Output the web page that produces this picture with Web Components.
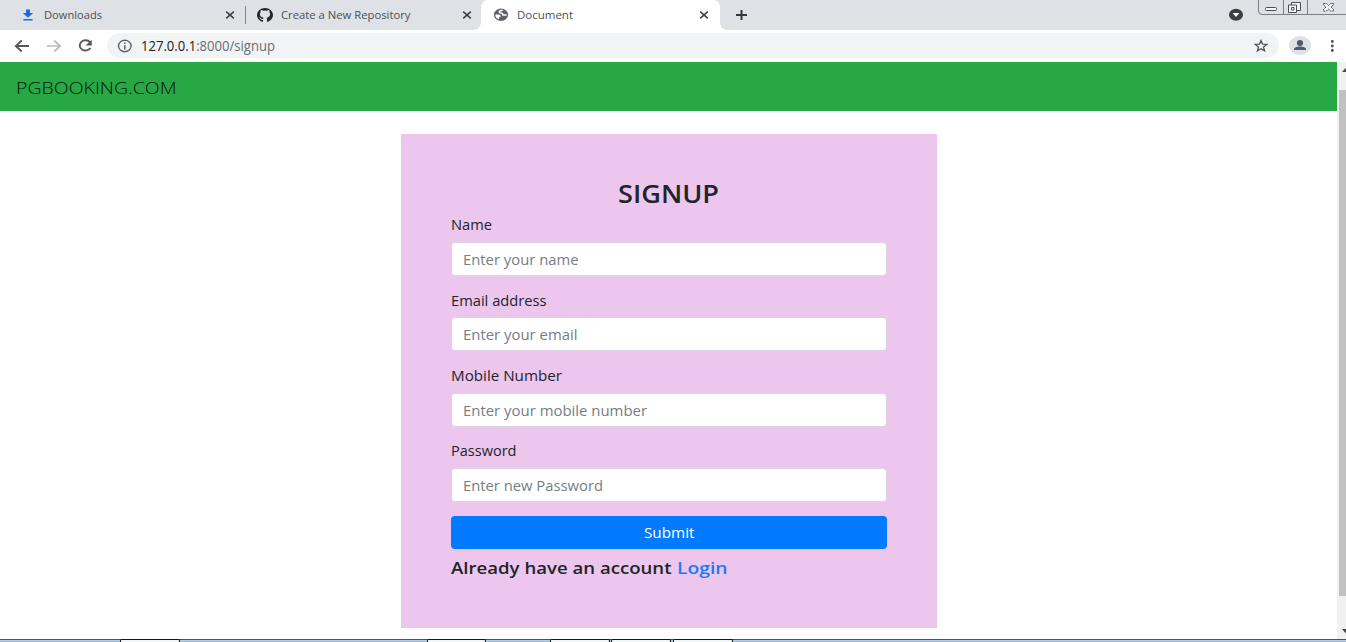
<!DOCTYPE html>
<html lang="en">
<head>
<meta charset="utf-8">
<title>Document</title>
<style>
html,body{margin:0;padding:0;height:642px;overflow:hidden;background:#fff;font-family:"Open Sans","Noto Sans",sans-serif}
</style>
</head>
<body>
<browser-window></browser-window>
<script>
// Text run condensed or expanded to an exact advance width.
class FitText extends HTMLElement{
  connectedCallback(){
    const w=+this.getAttribute('w'),s=this.getAttribute('size')||14;
    const root=this.attachShadow({mode:'open'});
    root.innerHTML=`<style>:host{display:block;flex:none;width:${w}px;height:20px;font-size:${s}px;line-height:20px;white-space:nowrap}
    span{display:inline-block;transform-origin:0 50%}</style><span><slot></slot></span>`;
    const sp=root.querySelector('span');
    const natural=sp.getBoundingClientRect().width;
    if(natural)sp.style.transform=`scaleX(${w/natural})`;
  }
}
customElements.define('fit-text',FitText);

const define=(name,html)=>customElements.define(name,class extends HTMLElement{
  constructor(){super();this.attachShadow({mode:'open'}).innerHTML=typeof html==='function'?html(this):html}
});

define('browser-tab',`<style>
:host{display:flex;box-sizing:border-box;height:30px;align-items:center;color:#4c5054}
.icon{width:16px;height:16px;flex:none;margin-right:8px}
::slotted(svg){display:block}
.text{margin-top:-1px}
.close{margin-left:auto;flex:none}
</style><div class="icon"><slot name="icon"></slot></div><div class="text"><slot></slot></div>
<svg class="close" width="10" height="10" viewBox="0 0 10 10"><path d="M1.2 1.6 8.8 8.4M8.8 1.6 1.2 8.4" stroke="#3c4043" stroke-width="1.5"/></svg>`);

define('tab-strip',`<style>
:host{display:flex;height:30px;background:#dee1e6;position:relative}
.a{width:245px;padding:0 10px 0 20px}
.b{width:235px;padding:0 9px 0 11px}
.c{width:239px;padding:0 11px 0 12px;background:#fff;border-radius:7px 7px 0 0;position:relative}
.c::before,.c::after{content:"";position:absolute;bottom:0;width:7px;height:7px}
.c::before{left:-7px;background:radial-gradient(circle at 0 0,#0000 6.5px,#fff 7px)}
.c::after{right:-7px;background:radial-gradient(circle at 100% 0,#0000 6.5px,#fff 7px)}
.sep{width:1px;height:18px;background:#80868b;margin:6px 0 0}
.plus{margin:9px 0 0 15px}
.drop{margin:8px 15px 0 auto}
.ctl{width:88px;height:15px;display:block}
</style>
<browser-tab class="a"><svg slot="icon" width="16" height="16" viewBox="0 0 16 16"><path d="M6 2.500h4v3.500h3.200L8 10.800 2.800 6H6zM3.400 11.900h9.200v1.700H3.400z" fill="#1a6be0"/></svg><fit-text w="58" size="11.5">Downloads</fit-text></browser-tab>
<div class="sep"></div>
<browser-tab class="b"><svg slot="icon" width="16" height="16" viewBox="0 0 16 16"><path fill="#24292e" d="M8 .9C3.580.9 0 4.100 0 8c0 3.160 2.290 5.910 5.470 6.810.4.070.55-.17.55-.38v-1.490c-2.230.49-2.700-1.070-2.700-1.070-.36-.93-.89-1.170-.89-1.170-.73-.5.05-.49.05-.49.81.06 1.230.83 1.230.83.72 1.230 1.880.88 2.340.67.07-.52.28-.88.5-1.080C4.780 10.460 2.900 9.760 2.900 7.100c0-.87.310-1.590.83-2.150-.09-.2-.36-1.020.08-2.020 0 0 .67-.21 2.200.72a7.600 7.600 0 0 1 4 0c1.530-.93 2.200-.72 2.200-.72.44 1 .16 1.820.08 2.020.51.56.82 1.270.82 2.150 0 2.770-1.870 3.450-3.650 3.650.29.25.54.73.54 1.480v2.200c0 .21.15.46.55.38C13.710 13.910 16 11.160 16 8 16 4.100 12.420.9 8 .9z"/></svg><fit-text w="129.500" size="11.5">Create a New Repository</fit-text></browser-tab>
<browser-tab class="c"><svg slot="icon" width="16" height="16" viewBox="0 0 16 16"><ellipse cx="8" cy="7.800" rx="7.100" ry="6.200" fill="#5f6368"/><path d="M9.800 3.200 7.300 3.800C6 4.400 6.200 5.600 7.400 5.900L9.500 6.600 9.900 8H13.600" fill="none" stroke="#fff" stroke-width="1.500"/><path d="M2.300 7.600H5.500C7 7.700 7.900 8.500 7.700 9.800L6 10.200V12.600C3.800 11.900 2.200 10.100 2.300 7.600z" fill="#fff"/></svg><fit-text w="56" size="11.5">Document</fit-text></browser-tab>
<svg class="plus" width="13" height="12" viewBox="0 0 13 12"><path d="M6.500 1v10M1 6h11" stroke="#34383b" stroke-width="2"/></svg>
<svg class="drop" width="14" height="13" viewBox="0 0 14 13"><ellipse cx="7" cy="6.800" rx="7" ry="6" fill="#3c4043"/><path d="M3.700 5h6.600L7 9z" fill="#fff"/></svg>
<svg class="ctl" viewBox="0 0 88 15"><path d="M.5 0v11q0 3.500 3.500 3.500h84M25.500 0v14M49.500 0v14" fill="none" stroke="#7b7f85"/><g fill="#f7f8f9" stroke="#4a4e54"><rect x="7.500" y="7.500" width="11" height="3" rx="1"/><path d="M33.500 2.500h9v8h-9z"/><path d="M30.500 5h8v7.500h-8z"/><path d="M33.500 7.500h2.500v2.500h-2.500z"/></g><path d="M65.500 3.500h3l2 2 2-2h3v1.500L73 7l2.500 2.500V11h-3l-2-2-2 2h-3V9.500L68 7l-2.500-2z" fill="#f3f4f5" stroke="#4a4e54" stroke-dasharray="2 .6"/></svg>`);

define('browser-toolbar',`<style>
:host{display:flex;height:32px;background:#fff;align-items:center;box-sizing:border-box;padding-bottom:1px}
svg{display:block;flex:none}
.nav{display:flex;gap:16px;padding-left:14px;width:93px}
.bar{width:1172px;height:25px;box-sizing:border-box;border-radius:13px;background:#f1f3f4;display:flex;align-items:center;padding:0 11px 0 10px;color:#6a6e73}
.bar fit-text{margin-left:9px}
b{font-weight:400;color:#202124}
.star{margin-left:auto}
.user{margin-left:10px}
.more{margin-left:18px}
</style>
<div class="nav">
<svg width="16" height="14" viewBox="0 0 16 14"><path d="M15 7H2M7.800 1.500 1.800 7l6 5.500" fill="none" stroke="#55595e" stroke-width="1.8"/></svg>
<svg width="16" height="14" viewBox="0 0 16 14"><path d="M1 7h13M8.200 1.500l6 5.500-6 5.500" fill="none" stroke="#b9bbbe" stroke-width="1.700"/></svg>
<svg width="16" height="14" viewBox="0 0 16 14"><path d="M12 3.200A5.800 5.100 0 1 0 12.500 9" fill="none" stroke="#55595e" stroke-width="1.900"/><path d="M13.800.800v5.700H7.500z" fill="#55595e"/></svg>
</div>
<div class="bar"><svg width="15" height="14" viewBox="0 0 15 14"><ellipse cx="7.800" cy="7" rx="6.300" ry="5.700" fill="none" stroke="#5f6368" stroke-width="1.400"/><path d="M7.800 6.200v4.200M7.800 3.500v1.500" stroke="#5f6368" stroke-width="1.600"/></svg>
<fit-text w="134" size="14"><b>127.0.0.1</b>:8000/signup</fit-text>
<svg class="star" width="14" height="13" viewBox="0 0 14 13"><path d="m7 1.500 1.500 3.600 4.300.300-3.300 2.600 1.100 3.900L7 9.800l-3.600 2.100 1.100-3.900L1.200 5.400l4.300-.300z" fill="none" stroke="#505459" stroke-width="1.300"/></svg></div>
<svg class="user" width="22" height="19" viewBox="0 0 22 19"><ellipse cx="11" cy="9.500" rx="11" ry="9.500" fill="#dee1e6"/><ellipse cx="11" cy="7" rx="3.100" ry="2.900" fill="#4d5b70"/><path d="M5 14v-.8c0-1.900 3.200-2.700 6-2.700s6 .8 6 2.700v.8z" fill="#4d5b70"/></svg>
<svg class="more" width="6" height="14" viewBox="0 0 6 14"><g fill="#4b4f54"><circle cx="3.300" cy="2.500" r="1.400"/><circle cx="3.300" cy="7" r="1.400"/><circle cx="3.300" cy="11.500" r="1.400"/></g></svg>`);

define('site-navbar',`<style>
:host{display:flex;height:49px;background:#28a745;box-sizing:border-box;padding:16px 16px 0;color:#041509;font-weight:350}
</style><fit-text w="160.500" size="17"><slot></slot></fit-text>`);

define('form-field',el=>`<style>
:host{display:block;height:75.300px}
.label{height:28px;color:#212529;box-sizing:border-box;padding-top:1.400px}
.box{height:34px;box-sizing:border-box;background:#fff;border:1px solid #dcd3e2;border-radius:4px;padding:7px 11px 0;color:#757d85}
</style><div class="label"><fit-text w="${el.getAttribute('lw')}" size="14">${el.getAttribute('label')}</fit-text></div>
<div class="box"><fit-text w="${el.getAttribute('pw')}" size="14">${el.getAttribute('hint')}</fit-text></div>`);

define('signup-card',`<style>
:host{display:block;box-sizing:border-box;width:536px;height:494px;background:#ecc6ed;padding:50px 50px 0;color:#212529}
.title{display:flex;justify-content:center;height:30px;font-weight:600;padding-right:1px}
.button{display:flex;justify-content:center;box-sizing:border-box;height:33px;padding:7px 0 0;border-radius:4px;background:#007bff;color:#fff;margin-top:.800px}
.foot{display:flex;gap:5px;padding-top:9px;font-weight:600}
a{color:#1a7bf2}
</style>
<div class="title"><fit-text w="101" size="24.500">SIGNUP</fit-text></div>
<form-field lw="41" label="Name" pw="115.500" hint="Enter your name"></form-field>
<form-field lw="95.500" label="Email address" pw="114.500" hint="Enter your email"></form-field>
<form-field lw="111" label="Mobile Number" pw="184" hint="Enter your mobile number"></form-field>
<form-field lw="65.500" label="Password" pw="140" hint="Enter new Password"></form-field>
<div class="button"><fit-text w="50.500" size="14">Submit</fit-text></div>
<div class="foot"><fit-text w="220.500" size="17">Already have an account</fit-text><a><fit-text w="50.500" size="17">Login</fit-text></a></div>`);

define('page-scrollbar',`<style>
:host{display:flex;flex-direction:column;width:9px;flex:none;background:#f1f1f1;overflow:hidden}
svg{display:block;flex:none}
.thumb{height:506px;margin-left:2px;background:#c1c1c1}
</style><svg width="9" height="28" viewBox="0 0 9 28"><path d="M5 10h7L8.500 6z" fill="#505050"/></svg><div class="thumb"></div>
<svg width="9" height="43" viewBox="0 0 9 43"><path d="M5 33h8l-4 4.500z" fill="#404040"/></svg>`);

define('task-bar',`<style>
:host{display:flex;height:3px;box-sizing:border-box;border-top:1px solid #465464;background:linear-gradient(#c9dced,#91a9c2)}
i{display:block;flex:none;height:3px;margin-top:-1px;box-sizing:border-box;width:60px;border:solid #10161c;border-width:1px 1px 0;border-radius:2px 2px 0 0;background:#f1f6f9}
</style><i style="margin-left:120px"></i><i style="margin-left:247px;width:59px"></i><i style="margin-left:64px"></i><i style="margin-left:1px"></i><i style="margin-left:2px"></i>`);

define('browser-window',`<style>
:host{display:flex;flex-direction:column;width:1346px;height:642px}
.view{display:flex;height:577px}
main{flex:1;background:#fff}
signup-card{margin:23px 0 0 401px}
</style>
<tab-strip></tab-strip><browser-toolbar></browser-toolbar>
<div class="view"><main><site-navbar>PGBOOKING.COM</site-navbar><signup-card></signup-card></main><page-scrollbar></page-scrollbar></div>
<task-bar></task-bar>`);
</script>
</body>
</html>
